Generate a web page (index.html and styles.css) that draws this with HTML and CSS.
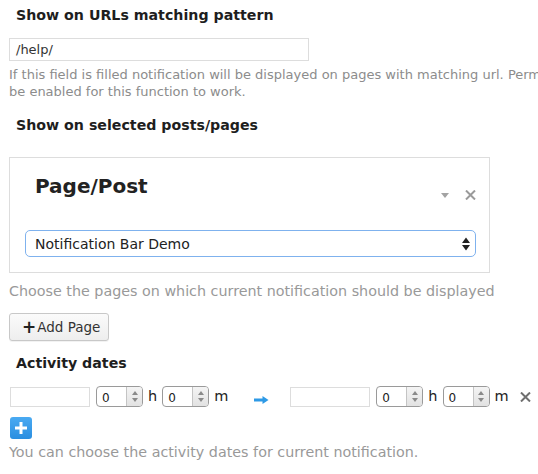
FILE: index.html
```html
<!DOCTYPE html>
<html>
<head>
<meta charset="utf-8">
<link rel="stylesheet" href="styles.css">
</head>
<body>
<div class="page">
  <h3 class="title t1">Show on URLs matching pattern</h3>
  <div class="url-input">/help/</div>
  <p class="help">If this field is filled notification will be displayed on pages with matching url. Permalinks must<br>be enabled for this function to work.</p>

  <h3 class="title t2">Show on selected posts/pages</h3>
  <div class="box">
    <div class="box-head">
      <span class="box-title">Page/Post</span>
      <span class="box-tools">
        <svg class="tri" width="8" height="5" viewBox="0 0 8 5"><path d="M0 0H8L4 5Z" fill="#a3a3a3"/></svg>
        <svg class="close" width="11" height="10" viewBox="0 0 11 10"><path d="M1 0.5L10 9.5M10 0.5L1 9.5" stroke="#9a9a9a" stroke-width="2"/></svg>
      </span>
    </div>
    <div class="select">
      <span>Notification Bar Demo</span>
      <svg width="8" height="14" viewBox="0 0 8 14"><path d="M0 6H8L4 0.5Z M0 8H8L4 13.5Z" fill="#222"/></svg>
    </div>
  </div>
  <p class="help2">Choose the pages on which current notification should be displayed</p>
  <div class="btn"><span class="plus">+</span>Add Page</div>

  <h3 class="title t3">Activity dates</h3>
  <div class="dates">
    <div class="date-input"></div>
    <div class="num"><span class="val">0</span><span class="spin"><i class="up"></i><i class="dn"></i></span></div>
    <span class="unit">h</span>
    <div class="num"><span class="val">0</span><span class="spin"><i class="up"></i><i class="dn"></i></span></div>
    <span class="unit">m</span>
    <svg class="arrow" width="15" height="8" viewBox="0 0 15 8"><path d="M0 2.5H8.5V0L14.5 4L8.5 8V5.5H0Z" fill="#2e9ae6"/></svg>
    <div class="date-input"></div>
    <div class="num"><span class="val">0</span><span class="spin"><i class="up"></i><i class="dn"></i></span></div>
    <span class="unit">h</span>
    <div class="num"><span class="val">0</span><span class="spin"><i class="up"></i><i class="dn"></i></span></div>
    <span class="unit">m</span>
    <svg class="xdel" width="11" height="10" viewBox="0 0 11 10"><path d="M1 0.5L10 9.5M10 0.5L1 9.5" stroke="#6f6f6f" stroke-width="2"/></svg>
  </div>
  <div class="add-btn"><svg width="14" height="14" viewBox="0 0 14 14"><path d="M7 1V13M1 7H13" stroke="#fff" stroke-width="3"/></svg></div>
  <p class="help3">You can choose the activity dates for current notification.</p>
</div>
</body>
</html>
```

FILE: styles.css
```css
html, body {
  margin: 0;
  padding: 0;
  background: #fff;
}
body {
  font-family: "DejaVu Sans", Verdana, sans-serif;
  color: #333;
}
.page {
  padding: 0 0 0 9px;
  overflow: hidden;
}
.title {
  font-size: 14.2px;
  font-weight: bold;
  color: #1e1e1e;
  margin: 0 0 0 7px;
  line-height: 18px;
}
.t1 { padding-top: 6px; }
.url-input {
  margin-top: 14px;
  width: 292px;
  height: 21px;
  border: 1px solid #ddd;
  font-size: 13px;
  line-height: 21px;
  padding-left: 6px;
  color: #333;
}
.help {
  margin: 5px 0 0;
  font-size: 13px;
  line-height: 17px;
  color: #8c8c8c;
  white-space: nowrap;
  overflow: hidden;
}
.t2 { margin-top: 16px; }
.box {
  margin-top: 23px;
  width: 479px;
  border: 1px solid #ddd;
  padding-bottom: 15px;
}
.box-head {
  display: flex;
  align-items: center;
  justify-content: space-between;
  padding: 16px 13px 0 25px;
  height: 24px;
}
.box-title {
  font-size: 20px;
  font-weight: bold;
  color: #222;
  line-height: 24px;
}
.box-tools {
  display: flex;
  align-items: center;
  gap: 16px;
  margin-top: 18px;
}
.select {
  margin: 32px 0 0 15px;
  height: 25px;
  border: 1.5px solid #7fb2ee;
  border-radius: 5px;
  display: flex;
  align-items: center;
  justify-content: space-between;
  padding: 0 5px 0 9px;
  width: 435px;
  font-size: 14px;
  color: #222;
}
.help2 {
  margin: 9px 0 0;
  font-size: 14.3px;
  color: #999;
  line-height: 18px;
}
.btn {
  margin-top: 13px;
  display: flex;
  width: max-content;
  align-items: center;
  height: 26px;
  padding: 0 8px 0 12px;
  border: 1px solid #c8c8c8;
  border-radius: 3px;
  background: linear-gradient(#fbfbfb, #eeeeee);
  font-size: 13.5px;
  color: #333;
  box-shadow: 0 1px 0 rgba(0,0,0,0.05);
}
.plus {
  font-weight: bold;
  font-size: 17px;
  margin-right: 1px;
  color: #222;
}
.t3 { margin-top: 13px; }
.dates {
  display: flex;
  align-items: center;
  margin-top: 14px;
  height: 21px;
  padding-left: 1px;
}
.date-input {
  width: 78px;
  height: 18px;
  border: 1px solid #ddd;
}
.num {
  margin-left: 6px;
  width: 45px;
  height: 19px;
  border: 1px solid #9a9a9a;
  border-radius: 4px;
  display: flex;
  justify-content: space-between;
  align-items: center;
  overflow: hidden;
}
.unit + .num { margin-left: 5px; }
.val {
  font-size: 12px;
  padding-left: 5px;
  color: #222;
  margin-top: 2px;
}
.spin {
  width: 15px;
  height: 19px;
  background: linear-gradient(#f4f4f4, #e2e2e2);
  border-left: 1px solid #c4c4c4;
  display: flex;
  flex-direction: column;
  align-items: center;
  justify-content: center;
  gap: 3px;
}
.spin i {
  display: block;
  width: 0;
  height: 0;
  border-left: 3px solid transparent;
  border-right: 3px solid transparent;
}
.spin .up { border-bottom: 4px solid #8a8a8a; }
.spin .dn { border-top: 4px solid #8a8a8a; }
.unit {
  font-size: 14.5px;
  color: #222;
  margin-left: 5px;
  line-height: 16px;
  margin-top: -2px;
}
.arrow {
  margin-left: 26px;
  margin-right: 21px;
  margin-top: 6px;
}
.xdel { margin-left: 11px; margin-top: 1px; }
.add-btn {
  margin: 10px 0 0 1px;
  width: 22px;
  height: 22px;
  border-radius: 3px;
  background: linear-gradient(#4aaaf2, #2a8ee0);
  display: flex;
  align-items: center;
  justify-content: center;
}
.help3 {
  margin: 4px 0 0;
  font-size: 14.3px;
  color: #999;
  line-height: 18px;
}
```
